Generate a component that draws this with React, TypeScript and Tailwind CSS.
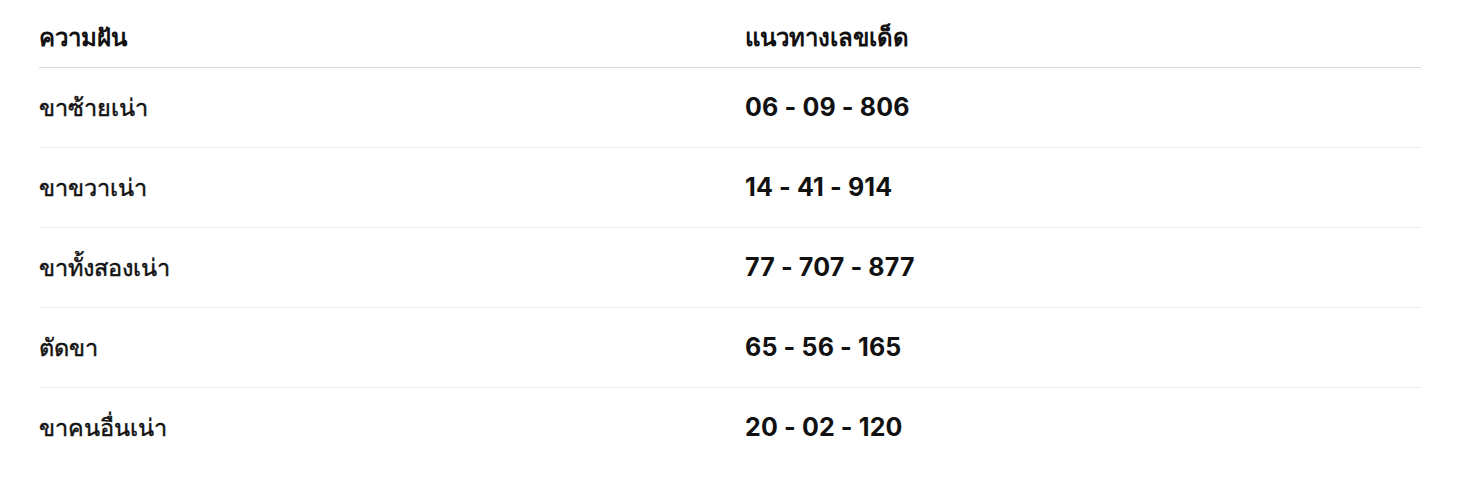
const rows = [
  { dream: "ขาซ้ายเน่า", numbers: "06 - 09 - 806" },
  { dream: "ขาขวาเน่า", numbers: "14 - 41 - 914" },
  { dream: "ขาทั้งสองเน่า", numbers: "77 - 707 - 877" },
  { dream: "ตัดขา", numbers: "65 - 56 - 165" },
  { dream: "ขาคนอื่นเน่า", numbers: "20 - 02 - 120" },
];

export default function App() {
  return (
    <div className="min-h-[482px] bg-white px-[39px] font-['Inter','Noto_Sans',sans-serif] text-[#111111]">
      <div className="grid grid-cols-[706px_1fr] border-b border-[#d9d9d9] pt-[22px] pb-[14px] text-[24px] font-bold leading-[31px]">
        <div>ความฝัน</div>
        <div>แนวทางเลขเด็ด</div>
      </div>
      {rows.map((row, i) => (
        <div
          key={row.dream}
          className={
            "grid h-[80px] grid-cols-[706px_1fr] items-center " +
            (i < rows.length - 1 ? "border-b border-[#f0f0f0]" : "")
          }
        >
          <div className="text-[23.5px] font-normal [-webkit-text-stroke:0.45px_#111111]">{row.dream}</div>
          <div className="text-[25px] font-bold tracking-[0.15px]">{row.numbers}</div>
        </div>
      ))}
    </div>
  );
}
